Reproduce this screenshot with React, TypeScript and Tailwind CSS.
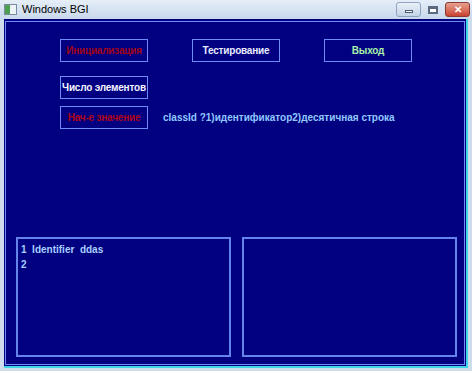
import React from "react";

const btn =
  "w-[88px] h-[23px] border border-[#6f8cf4] flex items-center justify-center text-[10px] font-bold whitespace-nowrap tracking-[-0.2px]";

export default function App() {
  return (
    <div
      className="w-[472px] h-[371px] bg-[#cfdcec] flex flex-col overflow-hidden"
      style={{ fontFamily: '"Liberation Sans", Arial, sans-serif' }}
    >
      {/* title bar */}
      <div className="h-[19px] flex items-center bg-gradient-to-b from-[#e6eef8] to-[#c8d8ec] relative">
        <div className="ml-[4px] w-[13px] h-[11px] border border-[#7a8aa0] bg-[#eef3f8] flex">
          <div className="w-[5px] h-full bg-[#4aa050]" />
        </div>
        <span className="ml-[5px] text-[11px] text-black">Windows BGI</span>
        <div className="ml-auto mr-[2px] flex items-start h-full pt-[2px]">
          <div className="w-[25px] h-[15px] rounded-[3px] border border-[#8ea3bd] bg-gradient-to-b from-[#eaf1f9] to-[#c3d3e6] flex items-end justify-center pb-[3px]">
            <div className="w-[8px] h-[3px] bg-white border border-[#4a5a70]" />
          </div>
          <div className="w-[24px] h-[15px] flex items-center justify-center">
            <div className="w-[10px] h-[8px] border-[2px] border-t-[3px] border-[#5a6a80] bg-white" />
          </div>
          <div className="w-[25px] h-[15px] rounded-[3px] border border-[#8a3a30] bg-gradient-to-b from-[#e8a090] to-[#c8402e] flex items-center justify-center text-white text-[10px] font-bold leading-none">
            ✕
          </div>
        </div>
      </div>

      {/* client area */}
      <div className="flex-1 mx-[4px] mb-[3px] bg-[#000080] border-r-2 border-b-2 border-[#40d8e8] p-[1px] pt-[2px]">
        <div className="h-full border border-[#6f8cf4] flex flex-col pl-[10px] pt-[17px]">
          <div className="flex ml-[44px] gap-[44px]">
            <div className={`${btn} text-[#a00018]`}>Инициализация</div>
            <div className={`${btn} text-[#e8ecff]`}>Тестирование</div>
            <div className={`${btn} text-[#a8f0a8]`}>Выход</div>
          </div>
          <div className="flex ml-[44px] mt-[14px]">
            <div className={`${btn} text-[#f4f4ff]`}>Число элементов</div>
          </div>
          <div className="flex items-center ml-[44px] mt-[7px]">
            <div className={`${btn} text-[#b00018]`}>Нач-е значение</div>
            <span className="ml-[15px] text-[10px] font-bold text-[#90c8ff] whitespace-nowrap">
              classId ?1)идентификатор2)десятичная строка
            </span>
          </div>
          <div className="flex gap-[11px] mt-[108px]">
            <div className="w-[215px] h-[120px] border-2 border-[#6484ec] px-[3px] pt-[3px] text-[10px] font-bold text-[#a8d0ff] leading-[15px]">
              <div>1 &nbsp;Identifier &nbsp;ddas</div>
              <div>2</div>
            </div>
            <div className="w-[215px] h-[120px] border-2 border-[#6484ec]" />
          </div>
        </div>
      </div>
    </div>
  );
}
